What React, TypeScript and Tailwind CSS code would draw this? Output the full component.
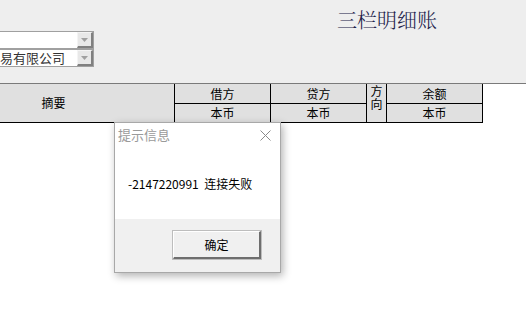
import React from "react";

const Combo = ({ text }: { text?: string }) => {
  return (
    <div className="flex h-[18px] w-[94px] border border-[#a0a0a0] border-l-0 bg-white">
      <div className="flex flex-1 items-center whitespace-nowrap text-[13px] leading-[16px] text-[#333]">
        {text}
      </div>
      <div className="flex w-[16px] items-center justify-center border-t border-l border-t-[#f4f4f4] border-l-[#f4f4f4] border-r-2 border-b-2 border-r-[#808080] border-b-[#808080] bg-[#e8e8e8]">
        <svg width="7" height="4" viewBox="0 0 7 4">
          <path d="M0 0 H7 L3.5 4 Z" fill="#a0a0a0" />
        </svg>
      </div>
    </div>
  );
};

const App = () => {
  const cell = "flex items-center justify-center border-r border-b border-black text-[12px] text-black";

  return (
    <div className="relative h-[329px] w-[526px] overflow-hidden bg-white font-['Noto_Sans_CJK_SC',sans-serif]">
      {/* top bar */}
      <div className="flex h-[84px] flex-col border-b border-[#7a7a7a] bg-[#eeeeee]">
        <div className="pl-[337px] pt-[7px] text-[20px] leading-[26px] text-[#22224a] font-['Noto_Serif_CJK_SC','Noto_Sans_CJK_SC',serif] font-light">
          三栏明细账
        </div>
        <div className="mt-[-2px] flex flex-col gap-0">
          <Combo />
          <Combo text="易有限公司" />
        </div>
      </div>

      {/* header table */}
      <div className="ml-[-67px] grid w-[550px] grid-cols-[242px_96px_96px_20px_96px] grid-rows-[20px_19px] bg-white">
        <div className={`${cell} row-span-2 bg-[#e0e0e0]`}>摘要</div>
        <div className={`${cell} bg-[#e0e0e0]`}>借方</div>
        <div className={`${cell} bg-[#e0e0e0]`}>贷方</div>
        <div className={`${cell} row-span-2 items-start bg-[#e0e0e0] leading-[13px]`}>
          <span className="w-[12px] text-center">方向</span>
        </div>
        <div className={`${cell} bg-[#e0e0e0]`}>余额</div>
        <div className={`${cell} bg-[#e0e0e0]`}>本币</div>
        <div className={`${cell} bg-[#e0e0e0]`}>本币</div>
        <div className={`${cell} bg-[#e0e0e0]`}>本币</div>
      </div>

      {/* message dialog */}
      <div className="absolute left-[114px] top-[122px] flex h-[151px] w-[167px] flex-col border border-[#a8a8a8] bg-white shadow-[2px_3px_8px_rgba(0,0,0,0.3)]">
        <div className="flex h-[24px] items-center justify-between pl-[3px] pr-[9px]">
          <span className="text-[13px] text-[#9a9a9a]">提示信息</span>
          <svg width="11" height="11" viewBox="0 0 11 11">
            <path d="M0.5 0.5 L10.5 10.5 M10.5 0.5 L0.5 10.5" stroke="#8a8a8a" strokeWidth="1" />
          </svg>
        </div>
        <div className="flex flex-1 items-center pl-[13px] pt-[1px] text-[12px] text-black">
          -2147220991&nbsp; 连接失败
        </div>
        <div className="flex h-[53px] items-start bg-[#f0f0f0] pl-[58px] pt-[12px]">
          <div className="flex h-[28px] w-[88px] items-center justify-center border-t border-l border-t-[#ffffff] border-l-[#ffffff] border-r-2 border-b-2 border-r-[#6e6e6e] border-b-[#6e6e6e] bg-[#f0f0f0] text-[12px] text-black outline outline-1 outline-[#bdbdbd]">
            确定
          </div>
        </div>
      </div>
    </div>
  );
};

export default App;
